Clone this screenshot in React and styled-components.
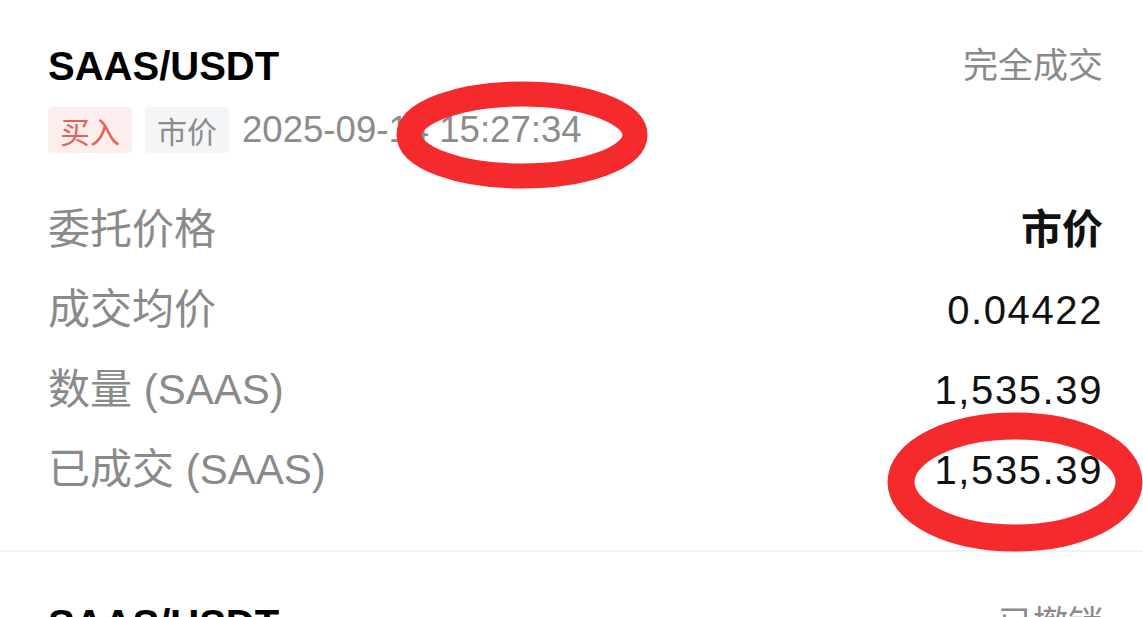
import styled, { createGlobalStyle } from "styled-components";

const GlobalStyle = createGlobalStyle`
  html, body {
    margin: 0;
    padding: 0;
    background: #fff;
    overflow: hidden;
  }
  body {
    font-family: "Liberation Sans", "Noto Sans CJK SC", sans-serif;
    color: #111;
  }
`;

const Page = styled.div`
  position: relative;
  width: 1143px;
  height: 617px;
  overflow: hidden;
`;

/* the list is scrolled a little, so the first card starts above the top */
const List = styled.div`
  margin-top: -6px;
`;

const Card = styled.section`
  padding: 48px 40px 40px 48px;
  border-bottom: 2px solid #f3f3f3;
`;

const Head = styled.div`
  display: flex;
  justify-content: space-between;
  align-items: flex-start;
  height: 48px;
`;

const Pair = styled.h2`
  margin: 0;
  font-size: 40px;
  line-height: 48px;
  font-weight: 700;
  color: #000;
`;

const Status = styled.span`
  font-family: "Noto Sans CJK SC", sans-serif;
  font-size: 35px;
  line-height: 42px;
  color: #8a8a8a;
`;

const Meta = styled.div`
  display: flex;
  align-items: center;
  gap: 13px;
  margin-top: 17px;
  height: 46px;
`;

const Tag = styled.span`
  display: flex;
  align-items: center;
  height: 46px;
  padding: 0 12px;
  border-radius: 4px;
  font-family: "Noto Sans CJK SC", sans-serif;
  font-size: 30px;
  color: ${(p) => (p.$buy ? "#e0625c" : "#8c8c8c")};
  background: ${(p) => (p.$buy ? "#fdeeee" : "#f4f5f7")};
`;

const Time = styled.span`
  font-size: 36.6px;
  line-height: 46px;
  color: #8c8c8c;
`;

const Rows = styled.div`
  margin-top: 37px;
  display: flex;
  flex-direction: column;
`;

const Row = styled.div`
  height: 80px;
  display: flex;
  justify-content: space-between;
  align-items: center;
`;

const Label = styled.span`
  font-size: 42px;
  line-height: 60px;
  color: #8a8a8a;
`;

const Value = styled.span`
  font-size: ${(p) => (p.$cjk ? "41px" : "40px")};
  line-height: 60px;
  font-weight: ${(p) => (p.$cjk ? 700 : 400)};
  letter-spacing: ${(p) => (p.$cjk ? "0" : "1.6px")};
  color: #111;
`;

const MarkSvg = styled.svg`
  position: absolute;
  pointer-events: none;
  overflow: visible;
`;

function Mark({ cx, cy, rx, ry, w }) {
  const W = (rx + w) * 2;
  const H = (ry + w) * 2;
  return (
    <MarkSvg
      width={W}
      height={H}
      style={{ left: cx - W / 2, top: cy - H / 2 }}
    >
      <ellipse
        cx={W / 2}
        cy={H / 2}
        rx={rx}
        ry={ry}
        fill="none"
        stroke="#f42a2c"
        strokeWidth={w}
      />
    </MarkSvg>
  );
}

const orders = [
  {
    status: "完全成交",
    side: "买入",
    type: "市价",
    time: "2025-09-14 15:27:34",
    rows: [
      { label: "委托价格", value: "市价", cjk: true },
      { label: "成交均价", value: "0.04422" },
      { label: "数量 (SAAS)", value: "1,535.39" },
      { label: "已成交 (SAAS)", value: "1,535.39" },
    ],
  },
  {
    status: "已撤销",
    side: "买入",
    type: "限价",
    time: "2025-09-14 15:20:11",
    rows: [],
  },
];

export default function App() {
  return (
    <Page>
      <GlobalStyle />
      <List>
        {orders.map((o, i) => (
          <Card key={i}>
            <Head>
              <Pair>SAAS/USDT</Pair>
              <Status>{o.status}</Status>
            </Head>
            <Meta>
              <Tag $buy>{o.side}</Tag>
              <Tag>{o.type}</Tag>
              <Time>{o.time}</Time>
            </Meta>
            {o.rows.length > 0 && (
              <Rows>
                {o.rows.map((r) => (
                  <Row key={r.label}>
                    <Label>{r.label}</Label>
                    <Value $cjk={r.cjk}>{r.value}</Value>
                  </Row>
                ))}
              </Rows>
            )}
          </Card>
        ))}
      </List>
      <Mark cx={522} cy={135} rx={113} ry={41} w={25} />
      <Mark cx={1015} cy={482} rx={114} ry={56} w={27} />
    </Page>
  );
}
